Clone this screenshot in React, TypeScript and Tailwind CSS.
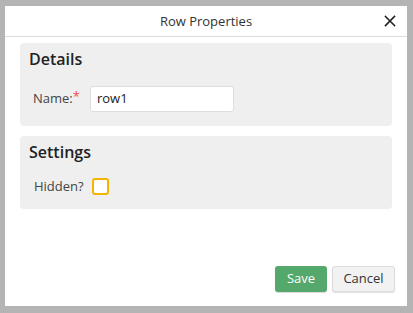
import React from "react";

export default function App() {
  return (
    <div
      className="w-[413px] h-[313px] bg-[#b4b4b4] pt-[6px] pl-[5px] overflow-hidden"
      style={{ fontFamily: '"Open Sans", "Noto Sans", sans-serif' }}
    >
      <div className="w-[402px] h-[300px] bg-white flex flex-col">
        <div className="relative h-[31px] border-b border-[#dcdcdc] flex items-center justify-center shrink-0">
          <span className="text-[13px] text-[#333] leading-none">Row Properties</span>
          <button className="absolute right-[9px] top-[7px] w-[16px] h-[16px] flex items-center justify-center">
            <svg width="12" height="12" viewBox="0 0 12 12">
              <path d="M1.5 1.5 L10.5 10.5 M10.5 1.5 L1.5 10.5" stroke="#222" strokeWidth="1.6" strokeLinecap="square" />
            </svg>
          </button>
        </div>
        <div className="flex flex-col gap-[10px] px-[15px] pt-[6px] flex-1">
          <div className="bg-[#efefef] rounded-[4px] h-[83px] px-[9px] pt-[5px]">
            <div className="text-[16px] font-semibold text-[#222] leading-[22px]">Details</div>
            <div className="flex items-center mt-[16px] pl-[4px]">
              <span className="text-[13px] text-[#444]">Name:</span>
              <span className="text-[13px] text-[#f04848] relative -top-[2px]">*</span>
              <div className="ml-[10px] w-[144px] h-[26px] bg-white border border-[#dedede] rounded-[3px] flex items-center px-[6px] text-[13px] text-[#222]">
                row1
              </div>
            </div>
          </div>
          <div className="bg-[#efefef] rounded-[4px] h-[73px] px-[9px] pt-[5px]">
            <div className="text-[16px] font-semibold text-[#222] leading-[22px]">Settings</div>
            <div className="flex items-center mt-[14px] pl-[5px]">
              <span className="text-[13px] text-[#444]">Hidden?</span>
              <span className="ml-[8px] w-[17px] h-[17px] bg-white border-2 border-[#f5b400] rounded-[3px]" />
            </div>
          </div>
        </div>
        <div className="flex justify-end gap-[5px] pr-[12px] pb-[14px]">
          <button className="w-[52px] h-[26px] bg-[#55a86b] text-white text-[13px] rounded-[3px] shadow-[0_1px_1px_rgba(0,0,0,0.15)]">
            Save
          </button>
          <button className="w-[63px] h-[26px] bg-[#f2f2f2] border border-[#dcdcdc] text-[#333] text-[13px] rounded-[3px] shadow-[0_1px_1px_rgba(0,0,0,0.12)]">
            Cancel
          </button>
        </div>
      </div>
    </div>
  );
}
